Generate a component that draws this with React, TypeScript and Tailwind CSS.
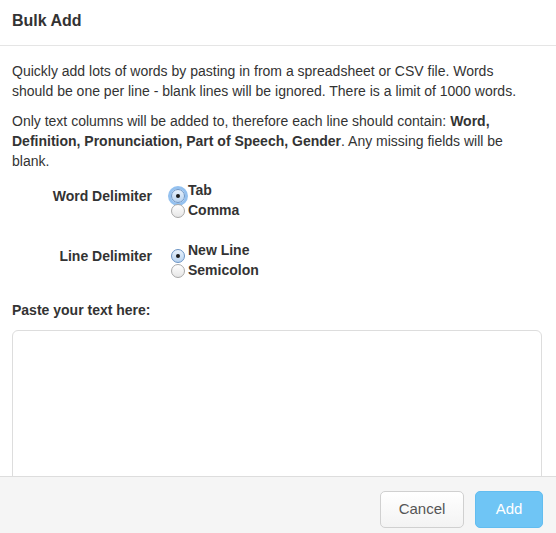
import React from "react";

type Option = {
  label: string;
  checked?: boolean;
  focused?: boolean;
};

const FONT = "font-['Helvetica_Neue','Liberation_Sans',Arial,sans-serif]";

// Radio circle drawn to look like the native Mac control
function Radio({ checked, focused }: { checked?: boolean; focused?: boolean }) {
  return (
    <span
      className={
        "relative mr-[3px] inline-flex h-[14px] w-[14px] shrink-0 items-center justify-center rounded-full border " +
        (checked
          ? "border-[#6a93c4] bg-gradient-to-b from-[#e9f2fc] to-[#b8d3f0]"
          : "border-[#a8a8a8] bg-gradient-to-b from-[#ffffff] to-[#e6e6e6]") +
        (focused ? " shadow-[0_0_0_3px_rgba(90,160,230,0.65)]" : "")
      }
    >
      {checked && <span className="h-[4px] w-[4px] rounded-full bg-[#1b1b1b]" />}
    </span>
  );
}

function RadioGroup({ title, options }: { title: string; options: Option[] }) {
  return (
    <div className="flex">
      <div className="w-[140px] shrink-0 pt-[5px] text-right text-[14px] font-bold leading-[20px] text-[#333]">
        {title}
      </div>
      <div className="ml-[19px] flex flex-col">
        {options.map((o) => (
          <label key={o.label} className="flex h-[20px] items-end">
            <span className="mb-[-2px]">
              <Radio checked={o.checked} focused={o.focused} />
            </span>
            <span className="self-start pt-[1px] text-[14px] font-bold leading-[16px] text-[#333]">
              {o.label}
            </span>
          </label>
        ))}
      </div>
    </div>
  );
}

export default function App() {
  return (
    <div className={`flex h-[533px] w-[556px] flex-col overflow-hidden bg-white ${FONT}`}>
      {/* Cabeçalho */}
      <div className="h-[46px] shrink-0 border-b border-[#e5e5e5] px-[12px] pt-[10px]">
        <h3 className="text-[16px] font-bold leading-[21px] text-[#333]">Bulk Add</h3>
      </div>

      {/* Corpo */}
      <div className="h-[430px] shrink-0 overflow-hidden pl-[12px] pr-[14px] pt-[15px] text-[14px] leading-[20px] text-[#333]">
        <p className="mb-[10px] pr-[14px]">
          Quickly add lots of words by pasting in from a spreadsheet or CSV file. Words should be one per
          line - blank lines will be ignored. There is a limit of 1000 words.
        </p>
        <p className="mb-[10px] pr-[14px]">
          Only text columns will be added to, therefore each line should contain:{" "}
          <b>Word, Definition, Pronunciation, Part of Speech, Gender</b>. Any missing fields will be
          blank.
        </p>

        <RadioGroup
          title="Word Delimiter"
          options={[{ label: "Tab", checked: true, focused: true }, { label: "Comma" }]}
        />
        <div className="mt-[20px]">
          <RadioGroup
            title="Line Delimiter"
            options={[{ label: "New Line", checked: true }, { label: "Semicolon" }]}
          />
        </div>

        <div className="mt-[19px] font-bold">Paste your text here:</div>
        <textarea className="mt-[10px] block h-[170px] w-full resize-y rounded-[6px] border border-[#ddd] bg-white outline-none" />
      </div>

      {/* Rodapé */}
      <div className="flex flex-1 justify-end gap-[11px] border-t border-[#ddd] bg-[#f5f5f5] pr-[13px] pt-[14px]">
        <button
          type="button"
          className="h-[37px] w-[84px] rounded-[5px] border border-[#d0d0d0] bg-gradient-to-b from-[#ffffff] to-[#f3f3f3] text-[15px] text-[#555]"
        >
          Cancel
        </button>
        <button
          type="button"
          className="h-[37px] w-[68px] rounded-[5px] border border-[#62bdf0] bg-[#6fc5f5] text-[15px] text-white"
        >
          Add
        </button>
      </div>
    </div>
  );
}
